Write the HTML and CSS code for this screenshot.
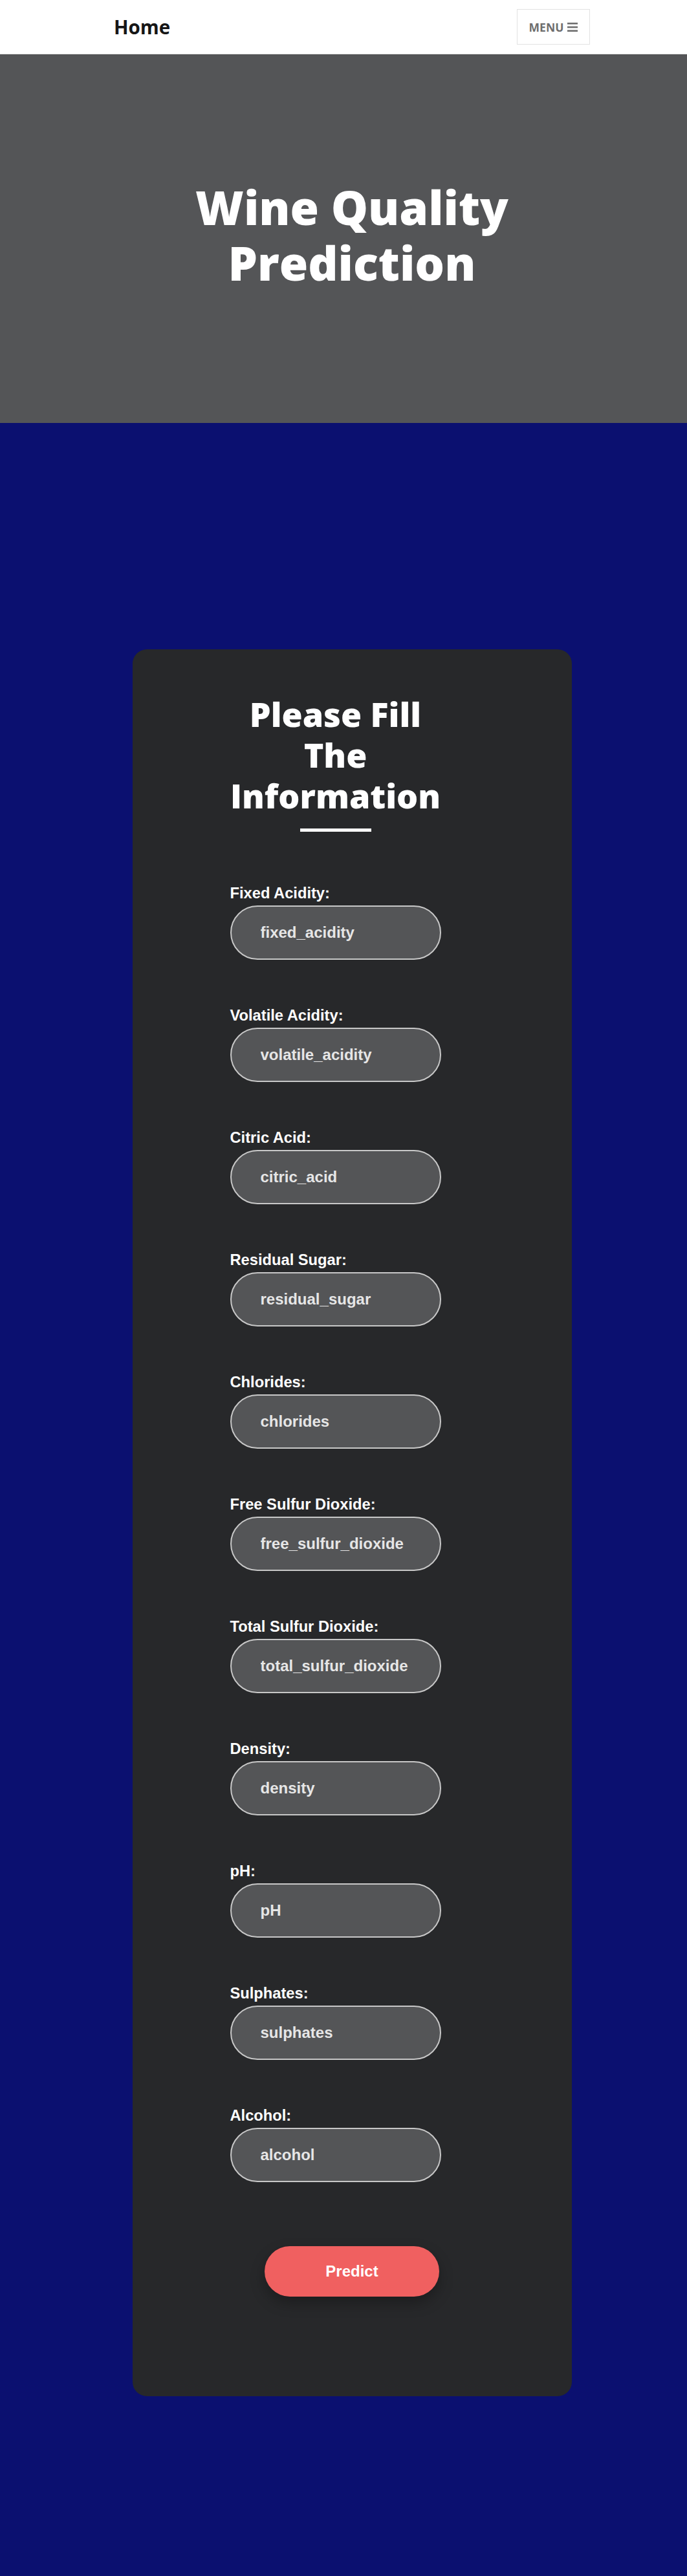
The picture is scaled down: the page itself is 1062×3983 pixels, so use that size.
FILE: index.html
```html
<!DOCTYPE html>
<html lang="en">
<head>
<meta charset="utf-8">
<title>Wine Quality Prediction</title>
<link rel="stylesheet" href="styles.css">
</head>
<body>
<header class="topbar">
  <div class="topbar-inner">
    <a class="brand" href="#">Home</a>
    <button class="menu-btn" type="button">
      <span>MENU</span>
      <svg class="menu-icon" width="16" height="14" viewBox="0 0 16 14" aria-hidden="true">
        <rect x="0" y="0" width="16" height="2.6"/>
        <rect x="0" y="5.7" width="16" height="2.6"/>
        <rect x="0" y="11.4" width="16" height="2.6"/>
      </svg>
    </button>
  </div>
</header>

<section class="hero">
  <h1 class="hero-title">Wine Quality Prediction</h1>
</section>

<main class="stage">
  <form class="card" action="#">
    <div class="card-col">
      <h2 class="card-title">Please Fill The Information</h2>
      <div class="title-bar"></div>

      <div class="fields">
        <div class="field">
          <label for="fixed_acidity">Fixed Acidity:</label>
          <input id="fixed_acidity" type="text" placeholder="fixed_acidity">
        </div>
        <div class="field">
          <label for="volatile_acidity">Volatile Acidity:</label>
          <input id="volatile_acidity" type="text" placeholder="volatile_acidity">
        </div>
        <div class="field">
          <label for="citric_acid">Citric Acid:</label>
          <input id="citric_acid" type="text" placeholder="citric_acid">
        </div>
        <div class="field">
          <label for="residual_sugar">Residual Sugar:</label>
          <input id="residual_sugar" type="text" placeholder="residual_sugar">
        </div>
        <div class="field">
          <label for="chlorides">Chlorides:</label>
          <input id="chlorides" type="text" placeholder="chlorides">
        </div>
        <div class="field">
          <label for="free_sulfur_dioxide">Free Sulfur Dioxide:</label>
          <input id="free_sulfur_dioxide" type="text" placeholder="free_sulfur_dioxide">
        </div>
        <div class="field">
          <label for="total_sulfur_dioxide">Total Sulfur Dioxide:</label>
          <input id="total_sulfur_dioxide" type="text" placeholder="total_sulfur_dioxide">
        </div>
        <div class="field">
          <label for="density">Density:</label>
          <input id="density" type="text" placeholder="density">
        </div>
        <div class="field">
          <label for="pH">pH:</label>
          <input id="pH" type="text" placeholder="pH">
        </div>
        <div class="field">
          <label for="sulphates">Sulphates:</label>
          <input id="sulphates" type="text" placeholder="sulphates">
        </div>
        <div class="field">
          <label for="alcohol">Alcohol:</label>
          <input id="alcohol" type="text" placeholder="alcohol">
        </div>
      </div>
    </div>
    <button class="predict" type="submit">Predict</button>
  </form>
</main>
</body>
</html>
```

FILE: styles.css
```css
* {
  box-sizing: border-box;
}

html, body {
  margin: 0;
  padding: 0;
}

body {
  font-family: "Liberation Sans", Arial, sans-serif;
  background: #0b1070;
}

/* ---------- top bar ---------- */
.topbar {
  background: #ffffff;
  border-bottom: 1px solid #e4e4e4;
  padding-left: 26px;
}

.topbar-inner {
  width: 736px;
  height: 83px;
  margin: 0 auto;
  display: flex;
  align-items: center;
  justify-content: space-between;
}

.brand {
  font-family: "Open Sans", sans-serif;
  font-weight: 700;
  font-size: 29.5px;
  color: #161616;
  text-decoration: none;
}

.menu-btn {
  width: 113px;
  height: 55px;
  display: inline-flex;
  align-items: center;
  justify-content: center;
  gap: 6px;
  background: #ffffff;
  border: 1px solid #e2e2e2;
  border-radius: 0;
  padding: 0;
  font-family: "Open Sans", sans-serif;
  font-weight: 700;
  font-size: 17.5px;
  color: #6e6e6e;
}

.menu-icon {
  fill: #6e6e6e;
  display: block;
}

/* ---------- hero ---------- */
.hero {
  background: #545557;
  padding: 193px 0 204px 26px;
}

.hero-title {
  width: 736px;
  margin: 0 auto;
  font-family: "Open Sans", sans-serif;
  font-weight: 800;
  font-size: 72px;
  line-height: 1.2;
  color: #ffffff;
  text-align: center;
}

/* ---------- form stage ---------- */
.stage {
  background: #0b1070;
  padding: 350px 0 278px 26px;
}

.card {
  width: 679px;
  margin: 0 auto;
  background: #27282a;
  border-radius: 22px;
  padding: 68px 0 154px;
}

.card-col {
  width: 326px;
  margin-left: 151px;
}

.card-title {
  margin: 0;
  font-family: "Open Sans", sans-serif;
  font-weight: 800;
  font-size: 52px;
  line-height: 63px;
  color: #ffffff;
  text-align: center;
}

.title-bar {
  width: 110px;
  height: 5px;
  margin: 20px auto 0;
  background: #ffffff;
}

.fields {
  margin-top: 83px;
  display: flex;
  flex-direction: column;
  gap: 74px;
}

.field label {
  display: block;
  font-size: 23.7px;
  line-height: 25px;
  font-weight: 700;
  color: #ffffff;
  margin-bottom: 6px;
}

.field input {
  display: block;
  width: 326px;
  height: 84px;
  border: 2px solid #c8c8c8;
  border-radius: 42px;
  background: #545557;
  padding: 0 20px 0 45px;
  font-family: "Liberation Sans", Arial, sans-serif;
  font-size: 24px;
  font-weight: 700;
  color: #e8e8e8;
  outline: none;
}

.field input::placeholder {
  color: #e6e6e6;
  opacity: 1;
}

.predict {
  display: block;
  width: 270px;
  height: 78px;
  margin: 99px auto 0;
  border: none;
  border-radius: 39px;
  background: #f06060;
  color: #ffffff;
  font-family: "Liberation Sans", Arial, sans-serif;
  font-size: 24px;
  font-weight: 700;
  box-shadow: 0 10px 22px rgba(0, 0, 0, 0.28);
}
```
